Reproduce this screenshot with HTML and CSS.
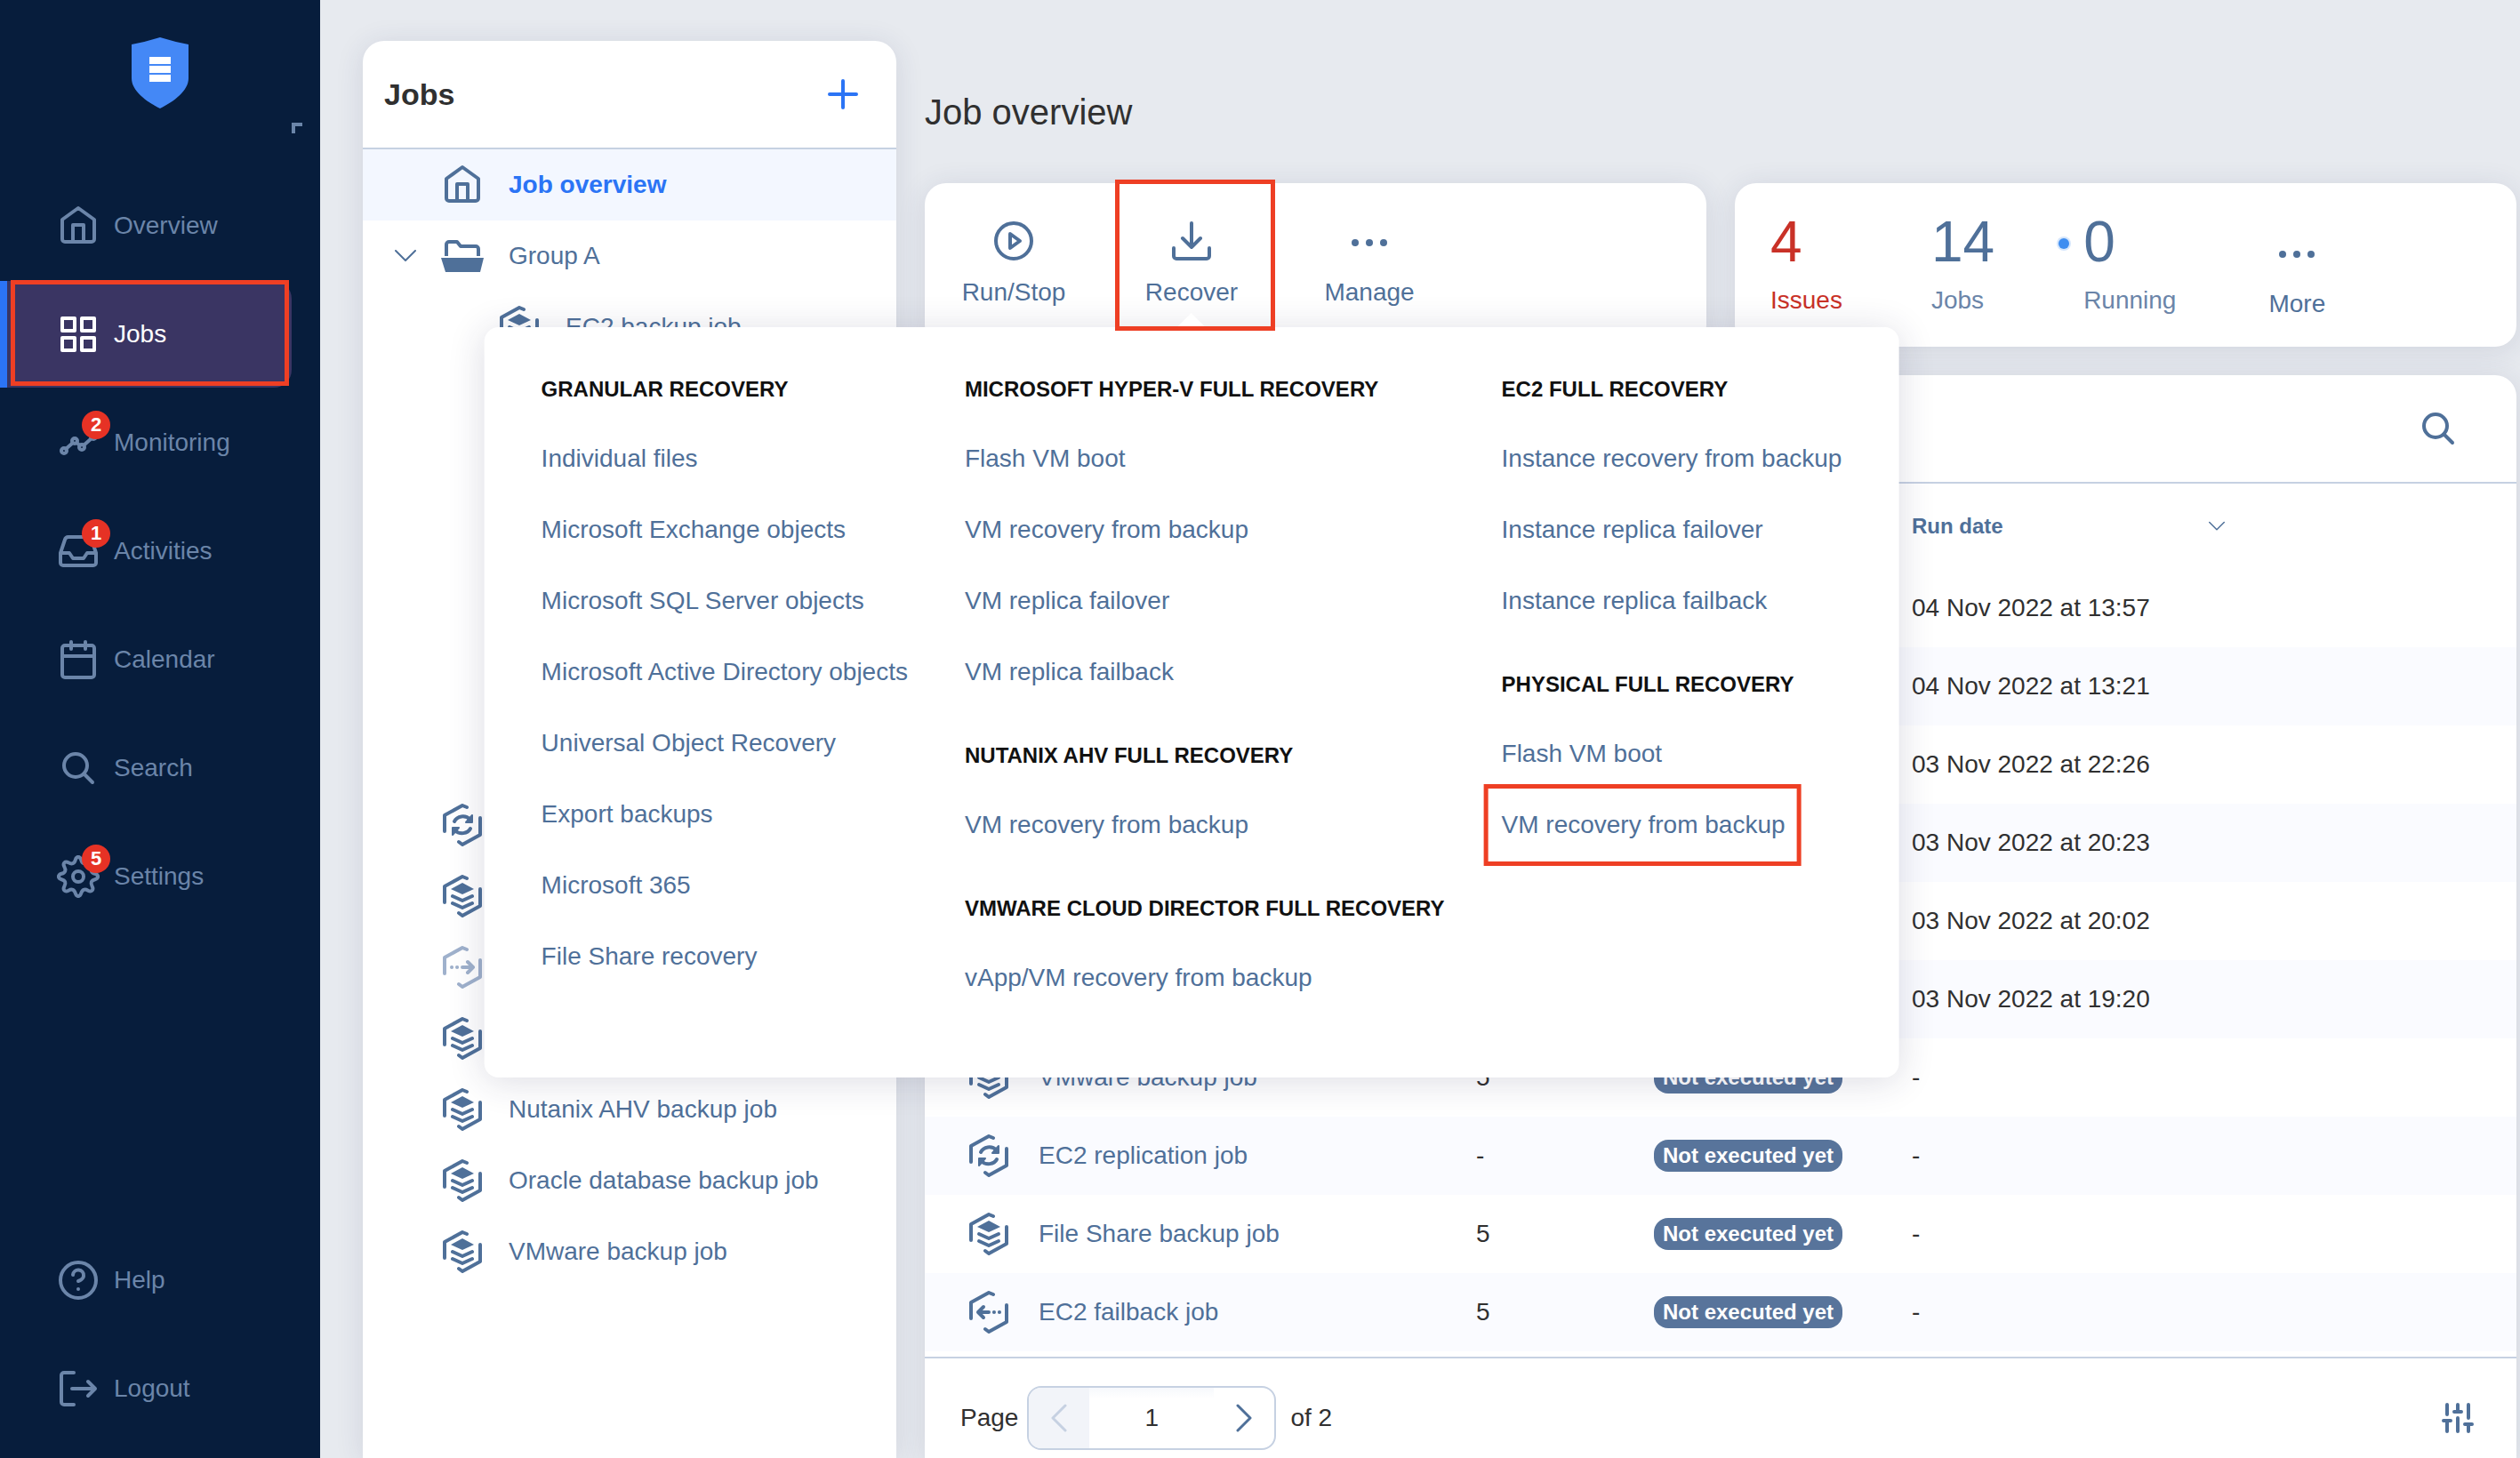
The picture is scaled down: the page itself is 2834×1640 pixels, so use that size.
FILE: index.html
```html
<!DOCTYPE html>
<html lang="en">
<head>
<meta charset="utf-8">
<meta name="viewport" content="width=device-width, initial-scale=1">
<title>Jobs - Job overview</title>
<link rel="stylesheet" href="styles.css">
</head>
<body>
<svg class="sprite" aria-hidden="true">
    <symbol id="i-home" viewBox="0 0 48 48"><path d="M6 17 24 4l18 13v22a3 3 0 0 1-3 3H9a3 3 0 0 1-3-3zM18 42V23h12v19"/></symbol>
    <symbol id="i-grid" viewBox="0 0 48 48"><path d="M6 6h14v14H6zM28 6h14v14H28zM6 28h14v14H6zM28 28h14v14H28z"/></symbol>
    <symbol id="i-monitor" viewBox="0 0 48 48"><g stroke-width="4"><circle cx="8" cy="33" r="3"/><circle cx="20" cy="22" r="3"/><circle cx="28" cy="29" r="3"/><circle cx="41" cy="17" r="3"/><path d="m10 31 8-7M22 24l4 3M30 27l9-8"/></g></symbol>
    <symbol id="i-inbox" viewBox="0 0 48 48"><path d="m4 26 5-15a4 4 0 0 1 4-3h22a4 4 0 0 1 4 3l5 15v11a3 3 0 0 1-3 3H7a3 3 0 0 1-3-3zM4 26h10l4 6h12l4-6h10"/></symbol>
    <symbol id="i-calendar" viewBox="0 0 48 48"><rect x="6" y="8" width="36" height="36" rx="3"/><path d="M6 20h36M16 4v8M32 4v8"/></symbol>
    <symbol id="i-search" viewBox="0 0 48 48"><circle cx="21" cy="21" r="13"/><path d="m31 31 9 9"/></symbol>
    <symbol id="i-gear" viewBox="0 0 48 48">
        <g id="gear-quarter"><path d="M24 2C28.500 2 25.900 7.500 30.100 9.200 34.300 10.900 36.400 5.200 39.600 8.400 42.800 11.600 37.100 13.700 38.800 17.900 40.500 22.100 46 19.500 46 24"/></g>
        <use href="#gear-quarter" transform="rotate(90 24 24)"/>
        <use href="#gear-quarter" transform="rotate(180 24 24)"/>
        <use href="#gear-quarter" transform="rotate(270 24 24)"/>
        <circle cx="24" cy="24" r="6"/>
    </symbol>
    <symbol id="i-help" viewBox="0 0 48 48"><circle cx="24" cy="24" r="20"/><path d="M18 18a6 6 0 0 1 12 1c0 4-6 6-6 6M24 34v.1"/></symbol>
    <symbol id="i-logout" viewBox="0 0 48 48"><path d="M19 6H8a3 3 0 0 0-3 3v30a3 3 0 0 0 3 3h11M17 24h26M35 16l8 8-8 8"/></symbol>
    <symbol id="i-folder" viewBox="0 0 48 48"><path stroke-linecap="butt" d="M6 24V11a3 3 0 0 1 3-3h9l4 5h17a3 3 0 0 1 3 3v8"/><path fill="currentColor" stroke="none" d="M0 26h48l-4 16H5z"/></symbol>
    <symbol id="i-play" viewBox="0 0 48 48"><circle cx="24" cy="24" r="20"/><path d="m20 16 11 8-11 8z"/></symbol>
    <symbol id="i-recover" viewBox="0 0 48 48"><path d="M24 4v27M14 21l10 10 10-10M4 32v9a3 3 0 0 0 3 3h34a3 3 0 0 0 3-3v-9"/></symbol>
    <symbol id="i-dots" viewBox="0 0 48 48"><g fill="currentColor" stroke="none"><circle cx="8" cy="26" r="4"/><circle cx="24" cy="26" r="4"/><circle cx="40" cy="26" r="4"/></g></symbol>
    <symbol id="i-plus" viewBox="0 0 36 36"><path stroke-width="4" d="M18 3v30M3 18h30"/></symbol>
    <symbol id="i-sliders" viewBox="0 0 36 36"><path stroke-width="4" d="M6 3v11M6 22v11M2 21h8M18 3v8M14 11h8M18 18v15M30 3v15M26 25h8M30 25v8"/></symbol>
    <symbol id="i-hex" viewBox="0 0 44 48"><path d="m27 4-5-2L2 13v18M42 16v19L22 46l-4-3"/></symbol>
    <symbol id="i-backup" viewBox="0 0 44 48"><use href="#i-hex"/><path fill="currentColor" stroke="none" d="m22 9 13 7-13 6-13-6z"/><path d="m11 24 11 5 11-5M11 32l11 5 11-5"/></symbol>
    <symbol id="i-replica" viewBox="0 0 44 48"><use href="#i-hex"/><path d="M13 20c3-6 12-8 18-2M31 28c-3 6-12 7-18 2"/><path fill="currentColor" stroke-width="2" d="M33 13v8h-7zM11 35v-8h7z"/></symbol>
    <symbol id="i-failover" viewBox="0 0 44 48"><use href="#i-hex"/><path d="M10 24h.1M16 24h.1M22 24h12M28 18l6 6-6 6"/></symbol>
    <symbol id="i-failback" viewBox="0 0 44 48"><use href="#i-hex"/><path d="M34 24h-.1M28 24h-.1M22 24H10M16 18l-6 6 6 6"/></symbol>
</svg>

<div class="app">
    <aside class="sidebar">
        <svg class="logo" viewBox="0 0 64 80"><path fill="#4488f6" d="M32 0q16 5 32 8v38c0 14-16 26-32 34C16 72 0 60 0 46V8q16-3 32-8z"/><path fill="#fff" d="M20 22h24v8H20zM20 32h24v8H20zM20 42h24v8H20z"/></svg>
        <button class="collapse" aria-label="Collapse menu"></button>
        <nav class="nav">
            <a class="nav-item" href="#"><span class="nav-icon"><svg class="icon"><use href="#i-home"/></svg></span>Overview</a>
            <a class="nav-item active" href="#"><span class="nav-icon"><svg class="icon"><use href="#i-grid"/></svg></span>Jobs</a>
            <a class="nav-item" href="#"><span class="nav-icon"><svg class="icon"><use href="#i-monitor"/></svg><b class="count">2</b></span>Monitoring</a>
            <a class="nav-item" href="#"><span class="nav-icon"><svg class="icon"><use href="#i-inbox"/></svg><b class="count">1</b></span>Activities</a>
            <a class="nav-item" href="#"><span class="nav-icon"><svg class="icon"><use href="#i-calendar"/></svg></span>Calendar</a>
            <a class="nav-item" href="#"><span class="nav-icon"><svg class="icon"><use href="#i-search"/></svg></span>Search</a>
            <a class="nav-item" href="#"><span class="nav-icon"><svg class="icon"><use href="#i-gear"/></svg><b class="count">5</b></span>Settings</a>
        </nav>
        <nav class="nav nav-bottom">
            <a class="nav-item" href="#"><span class="nav-icon"><svg class="icon"><use href="#i-help"/></svg></span>Help</a>
            <a class="nav-item" href="#"><span class="nav-icon"><svg class="icon"><use href="#i-logout"/></svg></span>Logout</a>
        </nav>
    </aside>

    <section class="jobs-panel">
        <header class="jobs-head">
            <h2>Jobs</h2>
            <button class="add" aria-label="Create job"><svg class="icon-small"><use href="#i-plus"/></svg></button>
        </header>
        <ul class="tree">
            <li class="selected"><span class="toggle"></span><svg class="icon"><use href="#i-home"/></svg><a href="#">Job overview</a></li>
            <li><span class="toggle"><svg class="chevron" viewBox="0 0 24 14"><path d="m1 1 11 11L23 1"/></svg></span><svg class="icon"><use href="#i-folder"/></svg><a href="#">Group A</a></li>
            <li class="child"><svg class="icon"><use href="#i-backup"/></svg><a href="#">EC2 backup job</a></li>
            <li class="child"><svg class="icon"><use href="#i-failback"/></svg></li>
            <li class="child"><svg class="icon"><use href="#i-replica"/></svg></li>
            <li class="child"><svg class="icon"><use href="#i-backup"/></svg></li>
            <li class="child"><svg class="icon"><use href="#i-backup"/></svg></li>
            <li class="child"><svg class="icon"><use href="#i-replica"/></svg></li>
            <li class="child"><svg class="icon"><use href="#i-backup"/></svg></li>
            <li><span class="toggle"></span><svg class="icon"><use href="#i-replica"/></svg></li>
            <li><span class="toggle"></span><svg class="icon"><use href="#i-backup"/></svg></li>
            <li class="disabled"><span class="toggle"></span><svg class="icon"><use href="#i-failover"/></svg></li>
            <li><span class="toggle"></span><svg class="icon"><use href="#i-backup"/></svg></li>
            <li><span class="toggle"></span><svg class="icon"><use href="#i-backup"/></svg><a href="#">Nutanix AHV backup job</a></li>
            <li><span class="toggle"></span><svg class="icon"><use href="#i-backup"/></svg><a href="#">Oracle database backup job</a></li>
            <li><span class="toggle"></span><svg class="icon"><use href="#i-backup"/></svg><a href="#">VMware backup job</a></li>
        </ul>
    </section>

    <main class="main">
        <h1>Job overview</h1>
        <div class="top-cards">
            <div class="card actions">
                <div class="action"><button><svg class="icon"><use href="#i-play"/></svg>Run/Stop</button></div>
                <div class="action recover">
                    <button aria-expanded="true"><svg class="icon"><use href="#i-recover"/></svg>Recover</button>
                    <div class="menu">
                        <div class="menu-col">
                            <section>
                                <h3>GRANULAR RECOVERY</h3>
                                <a href="#">Individual files</a>
                                <a href="#">Microsoft Exchange objects</a>
                                <a href="#">Microsoft SQL Server objects</a>
                                <a href="#">Microsoft Active Directory objects</a>
                                <a href="#">Universal Object Recovery</a>
                                <a href="#">Export backups</a>
                                <a href="#">Microsoft 365</a>
                                <a href="#">File Share recovery</a>
                            </section>
                        </div>
                        <div class="menu-col">
                            <section>
                                <h3>MICROSOFT HYPER-V FULL RECOVERY</h3>
                                <a href="#">Flash VM boot</a>
                                <a href="#">VM recovery from backup</a>
                                <a href="#">VM replica failover</a>
                                <a href="#">VM replica failback</a>
                            </section>
                            <section>
                                <h3>NUTANIX AHV FULL RECOVERY</h3>
                                <a href="#">VM recovery from backup</a>
                            </section>
                            <section>
                                <h3>VMWARE CLOUD DIRECTOR FULL RECOVERY</h3>
                                <a href="#">vApp/VM recovery from backup</a>
                            </section>
                        </div>
                        <div class="menu-col">
                            <section>
                                <h3>EC2 FULL RECOVERY</h3>
                                <a href="#">Instance recovery from backup</a>
                                <a href="#">Instance replica failover</a>
                                <a href="#">Instance replica failback</a>
                            </section>
                            <section>
                                <h3>PHYSICAL FULL RECOVERY</h3>
                                <a href="#">Flash VM boot</a>
                                <a class="marked" href="#">VM recovery from backup</a>
                            </section>
                        </div>
                    </div>
                </div>
                <div class="action"><button><svg class="icon"><use href="#i-dots"/></svg>Manage</button></div>
            </div>
            <div class="card stats">
                <div class="stat issues"><strong>4</strong>Issues</div>
                <div class="stat"><strong>14</strong>Jobs</div>
                <div class="stat running"><strong>0</strong>Running</div>
                <button class="more"><svg class="icon"><use href="#i-dots"/></svg>More</button>
            </div>
        </div>

        <div class="card table-card">
            <header class="table-head">
                <button aria-label="Search jobs"><svg class="icon"><use href="#i-search"/></svg></button>
            </header>
            <table class="jobs-table">
                <colgroup><col class="c-name"><col class="c-priority"><col class="c-status"><col class="c-date"><col></colgroup>
                <thead>
                    <tr><th></th><th></th><th></th><th><span class="sort">Run date<svg class="chevron" viewBox="0 0 24 14"><path d="m1 1 11 11L23 1"/></svg></span></th><th></th></tr>
                </thead>
                <tbody>
                    <tr><td></td><td></td><td></td><td>04 Nov 2022 at 13:57</td><td></td></tr>
                    <tr><td></td><td></td><td></td><td>04 Nov 2022 at 13:21</td><td></td></tr>
                    <tr><td></td><td></td><td></td><td>03 Nov 2022 at 22:26</td><td></td></tr>
                    <tr><td></td><td></td><td></td><td>03 Nov 2022 at 20:23</td><td></td></tr>
                    <tr><td></td><td></td><td></td><td>03 Nov 2022 at 20:02</td><td></td></tr>
                    <tr><td></td><td></td><td></td><td>03 Nov 2022 at 19:20</td><td></td></tr>
                    <tr><td><a href="#"><svg class="icon"><use href="#i-backup"/></svg>VMware backup job</a></td><td>5</td><td><span class="tag">Not executed yet</span></td><td>-</td><td></td></tr>
                    <tr><td><a href="#"><svg class="icon"><use href="#i-replica"/></svg>EC2 replication job</a></td><td>-</td><td><span class="tag">Not executed yet</span></td><td>-</td><td></td></tr>
                    <tr><td><a href="#"><svg class="icon"><use href="#i-backup"/></svg>File Share backup job</a></td><td>5</td><td><span class="tag">Not executed yet</span></td><td>-</td><td></td></tr>
                    <tr><td><a href="#"><svg class="icon"><use href="#i-failback"/></svg>EC2 failback job</a></td><td>5</td><td><span class="tag">Not executed yet</span></td><td>-</td><td></td></tr>
                </tbody>
            </table>
            <footer class="table-foot">
                <label for="page">Page</label>
                <div class="pager">
                    <button class="prev" aria-label="Previous page" disabled><svg viewBox="0 0 18 32"><path d="M16 2 2 16l14 14"/></svg></button>
                    <input id="page" type="text" value="1">
                    <button aria-label="Next page"><svg viewBox="0 0 18 32"><path d="m2 2 14 14L2 30"/></svg></button>
                </div>
                <span>of 2</span>
                <button class="columns" aria-label="Table settings"><svg class="icon-small"><use href="#i-sliders"/></svg></button>
            </footer>
        </div>
    </main>
</div>
</body>
</html>
```

FILE: styles.css
```css
* {
    box-sizing: border-box;
}

body {
    margin: 0;
    background: #e7eaef;
    color: #303030;
    font-family: "Liberation Sans", Arial, sans-serif;
    font-size: 28px;
    line-height: 32px;
}

h1, h2, h3, ul {
    margin: 0;
    padding: 0;
}

a {
    color: inherit;
    text-decoration: none;
}

button {
    padding: 0;
    border: 0;
    background: none;
    color: #4f7099;
    font: inherit;
    cursor: pointer;
}

svg {
    display: block;
    flex: none;
    fill: none;
    stroke: currentColor;
    stroke-width: 4px;
    stroke-linecap: round;
    stroke-linejoin: round;
}

.logo path {
    stroke: none;
}

.sprite {
    position: absolute;
    width: 0;
    height: 0;
}

.icon {
    width: 48px;
    height: 48px;
}

.icon-small {
    width: 36px;
    height: 36px;
}

.chevron {
    width: 24px;
    height: 14px;
    stroke-width: 2px;
}

.app {
    display: flex;
    height: 100vh;
    overflow: hidden;
}

/* left navigation */

.sidebar {
    display: flex;
    flex: none;
    flex-direction: column;
    width: 360px;
    padding: 42px 0 18px;
    background: #071d3c;
    color: #6b85a9;
}

.logo {
    width: 64px;
    height: 80px;
    margin: 0 auto 16px;
}

.collapse {
    align-self: flex-end;
    width: 12px;
    height: 12px;
    margin: 0 20px 44px 0;
    border: solid #6b85a9;
    border-width: 4px 0 0 4px;
}

.nav {
    display: flex;
    flex-direction: column;
    gap: 2px;
}

.nav-bottom {
    margin-top: auto;
}

.nav-item {
    position: relative;
    display: flex;
    align-items: center;
    gap: 16px;
    height: 120px;
    margin-right: 32px;
    padding-left: 64px;
}

.nav-icon {
    position: relative;
}

.count {
    position: absolute;
    top: -12px;
    left: 28px;
    width: 32px;
    height: 32px;
    border-radius: 50%;
    background: #e63225;
    color: #fff;
    font-size: 22px;
    text-align: center;
}

.nav-item.active {
    padding-left: 56px;
    border-left: 8px solid #2b74f5;
    border-radius: 0 20px 20px 0;
    background: #3a3563;
    color: #fff;
}

/* red frames round the steps to click */

.nav-item.active::after,
.recover::after,
.marked::after {
    content: "";
    position: absolute;
    z-index: 20;
    border: 5px solid #ee3f24;
    pointer-events: none;
}

.nav-item.active::after {
    inset: -1px 3px 2px 4px;
}

.recover::after {
    inset: -4px 6px 18px 14px;
}

.marked::after {
    inset: -6px -18px -6px -20px;
}

/* job tree */

.jobs-panel {
    flex: none;
    width: 600px;
    margin: 46px 0 0 48px;
    border-radius: 24px 24px 0 0;
    background: #fff;
    box-shadow: 0 4px 32px rgba(40, 50, 100, 0.12);
}

.jobs-head {
    display: flex;
    align-items: center;
    justify-content: space-between;
    height: 122px;
    padding: 0 42px 0 24px;
    border-bottom: 2px solid #c6d1e2;
}

.jobs-head h2 {
    font-size: 34px;
}

.add {
    color: #2b74f5;
}

.tree {
    list-style: none;
    color: #4f7099;
}

.tree li {
    display: flex;
    align-items: center;
    height: 80px;
    padding-left: 36px;
}

.toggle {
    width: 52px;
}

.tree a {
    margin-left: 28px;
}

.tree .child {
    padding-left: 152px;
}

.tree .selected {
    background: #f3f7ff;
}

.selected a {
    color: #2b74f5;
    font-weight: bold;
}

.disabled {
    color: #9fb1cc;
}

/* content */

.main {
    display: flex;
    flex: 1;
    flex-direction: column;
    min-width: 0;
    padding: 46px 4px 0 32px;
}

h1 {
    font-size: 40px;
    font-weight: normal;
    line-height: 160px;
}

.top-cards {
    display: grid;
    grid-template-columns: 1fr 1fr;
    gap: 32px;
    margin-bottom: 32px;
}

.card {
    border-radius: 24px;
    background: #fff;
    box-shadow: 0 4px 32px rgba(40, 50, 100, 0.12);
}

.actions {
    display: flex;
    height: 184px;
}

.action {
    position: relative;
    width: 200px;
}

.action button {
    display: flex;
    flex-direction: column;
    align-items: center;
    gap: 18px;
    width: 100%;
    height: 100%;
    padding-top: 41px;
}

.menu {
    position: absolute;
    z-index: 10;
    top: 162px;
    left: 50%;
    display: flex;
    gap: 64px;
    width: max-content;
    padding: 32px 64px 72px;
    border-radius: 16px;
    background: #fff;
    box-shadow: 0 4px 40px rgba(40, 40, 80, 0.16);
    color: #4f7099;
    transform: translateX(-50%);
}

.menu::before {
    content: "";
    position: absolute;
    top: -16px;
    left: 50%;
    margin-left: -16px;
    border: solid transparent;
    border-width: 0 16px 16px;
    border-bottom-color: #fff;
}

.menu-col {
    display: flex;
    flex-direction: column;
    gap: 16px;
}

.menu section {
    display: flex;
    flex-direction: column;
    align-items: flex-start;
}

.menu h3 {
    color: #111;
    font-size: 24px;
    line-height: 76px;
}

.menu a {
    position: relative;
    line-height: 80px;
}

.stats {
    display: flex;
    gap: 100px;
    padding: 36px 40px 0;
    color: #6b85a9;
}

.stat {
    position: relative;
}

.stat strong {
    display: block;
    margin-bottom: 20px;
    color: #4f7099;
    font-size: 64px;
    font-weight: normal;
    line-height: 60px;
}

.issues,
.issues strong {
    color: #c93127;
}

.running::before {
    content: "";
    position: absolute;
    top: 26px;
    left: -28px;
    width: 12px;
    height: 12px;
    border-radius: 50%;
    background: #3e8df0;
    box-shadow: 0 0 0 2px #d5e6fc;
}

.more {
    display: flex;
    flex-direction: column;
    align-items: center;
    gap: 18px;
    padding: 18px 4px 0;
}

.table-card {
    display: flex;
    flex: 1;
    flex-direction: column;
    border-radius: 24px 24px 0 0;
}

.table-head {
    display: flex;
    align-items: center;
    justify-content: flex-end;
    height: 122px;
    padding: 0 64px 0 40px;
    border-bottom: 2px solid #c6d1e2;
}

.jobs-table {
    width: 100%;
    border-collapse: collapse;
    table-layout: fixed;
}

.c-name {
    width: 620px;
}

.c-priority {
    width: 200px;
}

.c-status {
    width: 290px;
}

.c-date {
    width: 352px;
}

.jobs-table th,
.jobs-table td {
    height: 88px;
    padding: 0;
    text-align: left;
}

.jobs-table th {
    height: 96px;
    color: #4f7099;
    font-size: 24px;
}

.jobs-table th:first-child,
.jobs-table td:first-child {
    padding-left: 48px;
}

.jobs-table tbody tr:nth-child(even) {
    background: #fafbff;
}

.jobs-table td a {
    display: flex;
    align-items: center;
    gap: 32px;
    color: #4f7099;
}

.sort {
    display: flex;
    align-items: center;
    justify-content: space-between;
}

.sort .chevron {
    width: 18px;
}

.tag {
    display: inline-block;
    padding: 2px 10px;
    border-radius: 16px;
    background: #58749b;
    color: #fff;
    font-size: 24px;
    font-weight: bold;
    vertical-align: middle;
}

.table-foot {
    display: flex;
    flex: 1;
    align-items: flex-start;
    margin-top: 6px;
    padding: 31px 48px 0 40px;
    border-top: 2px solid #c6d1e2;
    line-height: 72px;
}

.pager {
    display: flex;
    width: 280px;
    height: 72px;
    margin: 0 16px 0 10px;
    overflow: hidden;
    border: 2px solid #c6d1e2;
    border-radius: 16px;
}

.pager button {
    display: flex;
    flex: none;
    align-items: center;
    justify-content: center;
    width: 68px;
}

.pager svg {
    width: 18px;
    height: 32px;
    stroke-width: 3px;
}

.pager .prev {
    background: #f2f4f9;
    color: #c6d1e2;
}

.pager input {
    flex: 1;
    min-width: 0;
    padding: 0;
    border: 0;
    background: linear-gradient(#f6f8fc, #fff 12px);
    color: #303030;
    font: inherit;
    text-align: center;
}

.columns {
    align-self: flex-start;
    margin: 18px 0 0 auto;
}
```
